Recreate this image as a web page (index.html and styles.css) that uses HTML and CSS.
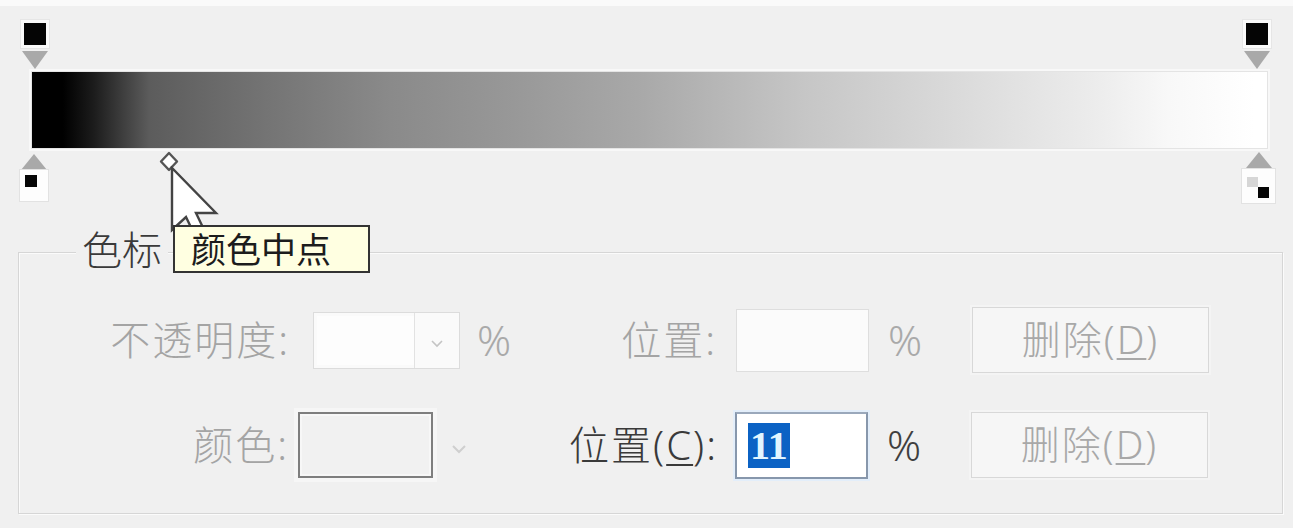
FILE: index.html
```html
<!DOCTYPE html>
<html lang="zh-CN">
<head>
<meta charset="utf-8">
<title>渐变编辑器</title>
<link rel="stylesheet" href="styles.css">
</head>
<body>
<div class="top-strip"></div>
<div class="editor">
  <div class="bar"></div>

  <div class="ostop ostop-left"><div class="osq"><div class="osq-in"></div></div><div class="tri-down"></div></div>
  <div class="ostop ostop-right"><div class="osq"><div class="osq-in"></div></div><div class="tri-down"></div></div>

  <div class="cstop cstop-left"><div class="tri-up"></div><div class="cbox"><div class="cblack"></div></div></div>
  <div class="cstop cstop-right"><div class="tri-up"></div><div class="cbox cbox-big"><div class="cgray"></div><div class="cblack2"></div></div></div>

  <svg class="midpoint" width="22" height="22" viewBox="0 0 22 22"><polygon points="11,2 19,10.5 11,19 3,10.5" fill="#fff" stroke="#555" stroke-width="2.4" stroke-linejoin="round"/></svg>

  <svg class="cursor" width="52" height="78" viewBox="0 0 52 78"><path d="M2 2 L2 64 L16 51 L28 76 L38 72 L26 47 L46 47 Z" fill="#fff" stroke="#444" stroke-width="2.4" stroke-linejoin="miter"/></svg>

  <div class="tooltip">颜色中点</div>
</div>

<div class="group">
  <div class="legend">色标</div>
  <div class="row row1">
    <div class="lbl lbl-a1 dis">不透明度:</div>
    <div class="combo"><div class="combo-field"></div><div class="combo-btn"><svg width="14" height="9" viewBox="0 0 14 9"><path d="M2 2 L7 7 L12 2" fill="none" stroke="#c4c4c4" stroke-width="1.6"/></svg></div></div>
    <div class="pct pct-a dis">%</div>
    <div class="lbl lbl-b1 dis">位置:</div>
    <div class="inp inp-dis"></div>
    <div class="pct pct-b dis">%</div>
    <div class="btn">删除(<u>D</u>)</div>
  </div>
  <div class="row row2">
    <div class="lbl lbl-a2 dis">颜色:</div>
    <div class="swatch"></div>
    <div class="swarrow"><svg width="22" height="12" viewBox="0 0 22 12"><path d="M5 3 L11 9 L17 3" fill="none" stroke="#cfcfcf" stroke-width="2"/></svg></div>
    <div class="lbl lbl-b2">位置(<u>C</u>):</div>
    <div class="inp inp-act"><span class="sel">11</span></div>
    <div class="pct pct-b">%</div>
    <div class="btn">删除(<u>D</u>)</div>
  </div>
</div>
</body>
</html>
```

FILE: styles.css
```css
html, body {
  margin: 0;
  padding: 0;
}
body {
  width: 1293px;
  height: 528px;
  overflow: hidden;
  background: #f0f0f0;
  font-family: "Noto Sans", "Noto Sans CJK SC", sans-serif;
  color: #3a3a3a;
}
.top-strip {
  height: 6px;
  background: #fafafa;
}
.editor {
  position: relative;
  height: 218px;
}
.bar {
  position: absolute;
  left: 32px;
  top: 66px;
  width: 1235px;
  height: 76px;
  box-shadow: 0 0 0 1px #e4e4e4, 0 0 0 3px #f8f8f8;
  background: linear-gradient(to right,
    #000 0%, #000 2.5%, #1c1c1c 5%, #404040 7.5%, #5c5c5c 9.5%, #747474 19%,
    #8a8a8a 29%, #989898 39%, #a8a8a8 49%, #c6c6c6 62.5%,
    #dcdcdc 76%, #ececec 86%, #f8f8f8 92%, #fff 99%, #fff 100%);
}
.ostop {
  position: absolute;
  width: 28px;
  top: 14px;
  display: flex;
  flex-direction: column;
  align-items: center;
}
.ostop-left { left: 21px; }
.ostop-right { left: 1243px; }
.osq {
  width: 28px;
  height: 28px;
  background: #fbfbfb;
  display: flex;
  align-items: center;
  justify-content: center;
  box-shadow: 0 0 0 1px #e6e6e6;
}
.osq-in {
  width: 22px;
  height: 22px;
  background: #050505;
}
.tri-down {
  width: 0;
  height: 0;
  margin-top: 3px;
  border-left: 13px solid transparent;
  border-right: 13px solid transparent;
  border-top: 18px solid #a9a9a9;
}
.cstop {
  position: absolute;
  display: flex;
  flex-direction: column;
  align-items: center;
}
.cstop-left { left: 20px; top: 148px; width: 28px; }
.cstop-right { left: 1240px; top: 146px; width: 37px; }
.tri-up {
  width: 0;
  height: 0;
  border-left: 13px solid transparent;
  border-right: 13px solid transparent;
  border-bottom: 16px solid #a9a9a9;
}
.cbox {
  position: relative;
  width: 28px;
  height: 31px;
  background: #fdfdfd;
  box-shadow: 0 0 0 1px #e2e2e2;
}
.cbox-big {
  width: 33px;
  height: 34px;
  margin-top: 1px;
}
.cblack {
  position: absolute;
  left: 5px;
  top: 5px;
  width: 12px;
  height: 12px;
  background: #050505;
}
.cgray {
  position: absolute;
  left: 5px;
  top: 8px;
  width: 11px;
  height: 10px;
  background: #d6d6d6;
}
.cblack2 {
  position: absolute;
  left: 16px;
  top: 18px;
  width: 11px;
  height: 11px;
  background: #050505;
}
.midpoint {
  position: absolute;
  left: 158px;
  top: 145px;
}
.cursor {
  position: absolute;
  left: 170px;
  top: 160px;
  z-index: 2;
}
.tooltip {
  position: absolute;
  z-index: 3;
  left: 173px;
  top: 219px;
  width: 197px;
  height: 48px;
  box-sizing: border-box;
  border: 2px solid #333;
  background: #ffffe1;
  color: #1c1c1c;
  font-family: "Noto Sans CJK SC", sans-serif;
  font-size: 35px;
  font-weight: 400;
  line-height: 42px;
  padding-left: 16px;
}
.group {
  margin: 28px 10px 0 18px;
  height: 262px;
  box-sizing: border-box;
  border: 1px solid #d6d6d6;
  box-shadow: inset 1px 1px 0 #fbfbfb, 1px 1px 0 #fbfbfb;
}
.legend {
  width: max-content;
  margin: -28px 0 0 57px;
  padding: 0 6px;
  height: 47px;
  background: #f0f0f0;
  font-family: "Noto Sans CJK SC", sans-serif;
  font-size: 40px;
  font-weight: 300;
  line-height: 47px;
  color: #3a3a3a;
}
.row {
  display: flex;
  align-items: center;
  height: 68px;
}
.row1 { margin-top: 34px; }
.row2 { margin-top: 37px; }
.lbl {
  text-align: right;
  font-size: 40px;
  font-weight: 300;
  letter-spacing: 2px;
  line-height: 68px;
  white-space: nowrap;
}
.dis { color: #a4a4a4; }
.lbl-a1 { width: 271px; margin-right: 23px; }
.lbl-b1 { width: 203px; margin-right: 19px; }
.lbl-a2 { width: 270px; margin-right: 9px; }
.lbl-b2 { width: 245px; margin-right: 17px; color: #3a3a3a; }
.combo {
  display: flex;
  width: 147px;
  height: 57px;
  box-sizing: border-box;
  border: 1px solid #dcdcdc;
  background: #fafafa;
}
.combo-field {
  flex: 1;
  background: #fdfdfd;
  margin: 3px 0 3px 3px;
}
.combo-btn {
  width: 44px;
  border-left: 1px solid #e2e2e2;
  display: flex;
  align-items: center;
  justify-content: center;
  padding-top: 6px;
}
.pct {
  font-size: 42px;
  font-weight: 300;
  line-height: 68px;
  color: #3f3f3f;
}
.pct.dis { color: #a9a9a9; }
.pct-a { width: 37px; margin-left: 17px; }
.pct-b { width: 35px; margin-left: 19px; margin-right: 49px; }
.inp {
  width: 133px;
  box-sizing: border-box;
}
.inp-dis {
  height: 63px;
  border: 1px solid #dedede;
  background: #fbfbfb;
}
.inp-act {
  height: 67px;
  border: 2px solid #8797ac;
  border-top-color: #9aa8bb;
  background: #fff;
  box-shadow: 0 0 0 2px #e3eefa;
  display: flex;
  align-items: center;
  padding-left: 11px;
}
.sel {
  display: block;
  background: #0b62c4;
  color: #e2f6ff;
  font-family: "Liberation Serif", serif;
  font-size: 40px;
  font-weight: bold;
  line-height: 45px;
  height: 45px;
  padding: 0 2px;
}
.btn {
  width: 237px;
  height: 66px;
  box-sizing: border-box;
  border: 1px solid #d8d8d8;
  background: #f6f6f6;
  box-shadow: 0 0 0 2px #f4f4f4;
  color: #a8a8a8;
  font-size: 39px;
  font-weight: 300;
  letter-spacing: 2px;
  line-height: 62px;
  text-align: center;
}
.btn u {
  text-decoration-thickness: 2px;
  text-underline-offset: 4px;
}
.lbl u {
  text-decoration-thickness: 2px;
  text-underline-offset: 4px;
}
.swatch {
  width: 135px;
  height: 66px;
  box-sizing: border-box;
  border: 2px solid #7e7e7e;
  background: #f1f1f1;
  box-shadow: inset 0 0 0 2px #f7f7f7, 0 0 0 4px #f6f6f6;
}
.swarrow {
  width: 28px;
  margin-left: 12px;
  display: flex;
  justify-content: center;
  padding-top: 8px;
}
```
